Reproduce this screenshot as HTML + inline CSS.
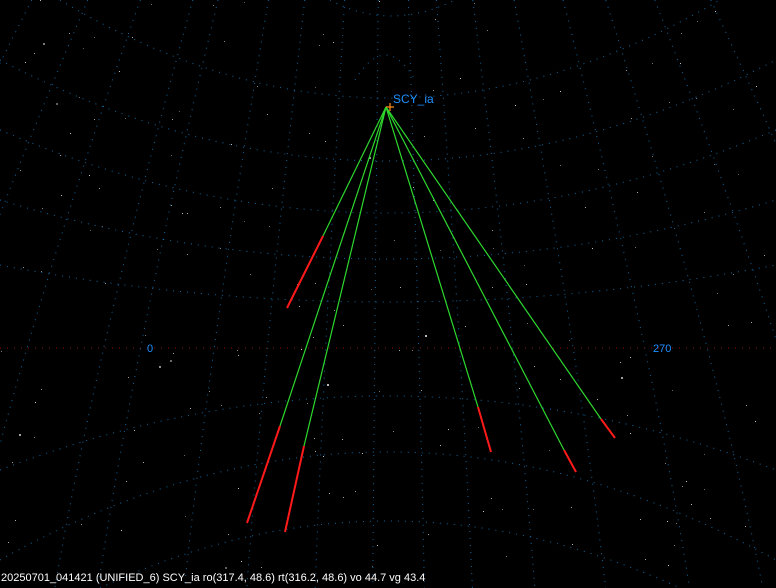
<!DOCTYPE html>
<html><head><meta charset="utf-8"><style>
html,body{margin:0;padding:0;background:#000;width:776px;height:588px;overflow:hidden}
svg{display:block}
text{font-family:"Liberation Sans",sans-serif}
</style></head><body>
<svg id="s" width="776" height="588" viewBox="0 0 776 588">
<rect width="776" height="588" fill="#000"/>
<g id="stars"></g>
<g fill="none" stroke="#1a80c8" stroke-width="1" stroke-dasharray="1 6" opacity="0.8">
<path d="M330,0 Q390,32 455,0"/>
<path d="M60,0 Q386,196 720,0"/>
<path d="M0,60 Q386,262 776,60"/>
<path d="M0,130 Q386,296 776,130"/>
<path d="M0,200 Q386,318 776,200"/>
<path d="M0,265 Q386,339 776,265"/>
<path d="M0,470 Q386,322 776,470"/>
<path d="M0,560 Q386,344 776,560"/>
<path d="M100,588 Q386,454 680,588"/>
<path d="M355,80 Q386,30 415,80"/>
<g id="mer"></g>
</g>
<line x1="0" y1="348" x2="776" y2="348" stroke="#8a1010" stroke-dasharray="1 6"/>
<g stroke-width="1.2">
<line x1="386" y1="107" x2="323" y2="236" stroke="#2ed82e"/><line x1="323" y1="236" x2="287" y2="308" stroke="#ff1a1a" stroke-width="2"/>
<line x1="386" y1="107" x2="280" y2="426" stroke="#2ed82e"/><line x1="280" y1="426" x2="247" y2="523" stroke="#ff1a1a" stroke-width="2"/>
<line x1="386" y1="107" x2="304" y2="446" stroke="#2ed82e"/><line x1="304" y1="446" x2="285" y2="532" stroke="#ff1a1a" stroke-width="2"/>
<line x1="386" y1="107" x2="478" y2="407" stroke="#2ed82e"/><line x1="478" y1="407" x2="491" y2="452" stroke="#ff1a1a" stroke-width="2"/>
<line x1="386" y1="107" x2="564" y2="450" stroke="#2ed82e"/><line x1="564" y1="450" x2="576" y2="472" stroke="#ff1a1a" stroke-width="2"/>
<line x1="386" y1="107" x2="601" y2="419" stroke="#2ed82e"/><line x1="601" y1="419" x2="615" y2="438" stroke="#ff1a1a" stroke-width="2"/>
</g>
<path d="M390,103 v8 M386,107 h8" stroke="#ff8c1a" stroke-width="1.2"/>
<text x="393" y="103" fill="#1e90ff" font-size="12">SCY_ia</text>
<text x="147" y="352" fill="#1e90ff" font-size="11">0</text>
<text x="653" y="352" fill="#1e90ff" font-size="11">270</text>
<text x="1" y="581" fill="#fff" font-size="11">20250701_041421 (UNIFIED_6) SCY_ia ro(317.4, 48.6) rt(316.2, 48.6) vo 44.7 vg 43.4</text>
</svg>
<script>
var ns="http://www.w3.org/2000/svg";
var st=document.getElementById("stars"),seed=7;
function r(){seed=(seed*16807)%2147483647;return seed/2147483647;}
for(var i=0;i<200;i++){var c=document.createElementNS(ns,"rect");var b=r();
c.setAttribute("x",Math.floor(r()*776));c.setAttribute("y",Math.floor(r()*570));
var sz=b>0.95?2:1;c.setAttribute("width",sz);c.setAttribute("height",sz);
var g=Math.floor(90+r()*120);c.setAttribute("fill","rgb("+g+","+g+","+g+")");st.appendChild(c);}
var m=document.getElementById("mer");
[-120,-40,35,110,146,218,270,327,375,418,458,510,569,639,700,770,850].forEach(function(x){
var p=document.createElementNS(ns,"path");var x0=386+(x-386)*0.7,x1=386+(x-386)*1.2,xm=386+(x-386);
p.setAttribute("d","M"+x0+",0 Q"+(2*xm-(x0+x1)/2)+",348 "+x1+",588");m.appendChild(p);});
</script>
</body></html>
